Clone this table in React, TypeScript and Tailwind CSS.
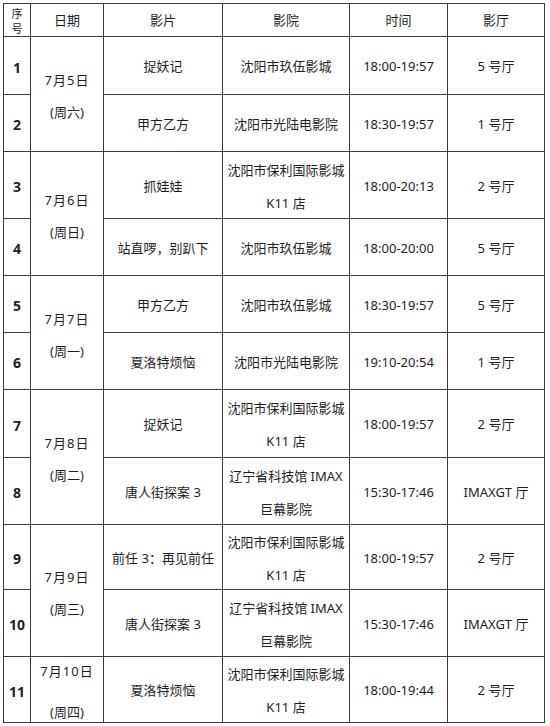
import React from "react";

type Row = {
  n: string;
  date?: { lines: string[]; span: number; leading?: string };
  film: string;
  cinema: string[];
  time: string;
  hall: string;
};

const rows: Row[] = [
  { n: "1", date: { lines: ["7月5日", "(周六)"], span: 2 }, film: "捉妖记", cinema: ["沈阳市玖伍影城"], time: "18:00-19:57", hall: "5 号厅" },
  { n: "2", film: "甲方乙方", cinema: ["沈阳市光陆电影院"], time: "18:30-19:57", hall: "1 号厅" },
  { n: "3", date: { lines: ["7月6日", "(周日)"], span: 2 }, film: "抓娃娃", cinema: ["沈阳市保利国际影城", "K11 店"], time: "18:00-20:13", hall: "2 号厅" },
  { n: "4", film: "站直啰，别趴下", cinema: ["沈阳市玖伍影城"], time: "18:00-20:00", hall: "5 号厅" },
  { n: "5", date: { lines: ["7月7日", "(周一)"], span: 2 }, film: "甲方乙方", cinema: ["沈阳市玖伍影城"], time: "18:30-19:57", hall: "5 号厅" },
  { n: "6", film: "夏洛特烦恼", cinema: ["沈阳市光陆电影院"], time: "19:10-20:54", hall: "1 号厅" },
  { n: "7", date: { lines: ["7月8日", "(周二)"], span: 2 }, film: "捉妖记", cinema: ["沈阳市保利国际影城", "K11 店"], time: "18:00-19:57", hall: "2 号厅" },
  { n: "8", film: "唐人街探案 3", cinema: ["辽宁省科技馆 IMAX", "巨幕影院"], time: "15:30-17:46", hall: "IMAXGT 厅" },
  { n: "9", date: { lines: ["7月9日", "(周三)"], span: 2 }, film: "前任 3：再见前任", cinema: ["沈阳市保利国际影城", "K11 店"], time: "18:00-19:57", hall: "2 号厅" },
  { n: "10", film: "唐人街探案 3", cinema: ["辽宁省科技馆 IMAX", "巨幕影院"], time: "15:30-17:46", hall: "IMAXGT 厅" },
  { n: "11", date: { lines: ["7月10日", "(周四)"], span: 1, leading: "leading-[41px]" }, film: "夏洛特烦恼", cinema: ["沈阳市保利国际影城", "K11 店"], time: "18:00-19:44", hall: "2 号厅" },
];

const cell = "bg-white flex flex-col items-center justify-center text-center";

export default function App() {
  return (
    <div
      className="bg-white w-[550px] h-[726px] pt-[3px] pl-[3px] text-[13px] text-[#1e1e1e]"
      style={{ fontFamily: '"Noto Sans", "Noto Sans CJK SC", sans-serif' }}
    >
      <div className="grid w-fit bg-[#3c3c3c] p-px gap-px grid-cols-[26px_72px_118px_126px_97px_96px] grid-rows-[32px_57px_56px_66px_56px_56px_56px_67px_66px_64px_66px_65px]">
        <div className={`${cell} text-[11px] leading-[15px] pt-px`}>
          <span>序</span>
          <span>号</span>
        </div>
        <div className={`${cell} pt-[2px]`}>日期</div>
        <div className={`${cell} pt-[2px]`}>影片</div>
        <div className={`${cell} pt-[2px]`}>影院</div>
        <div className={`${cell} pt-[2px]`}>时间</div>
        <div className={`${cell} pt-[2px]`}>影厅</div>
        {rows.map((r) => (
          <React.Fragment key={r.n}>
            <div className={`${cell} font-bold text-[14px] pt-[3px]`}>{r.n}</div>
            {r.date && (
              <div
                className={`${cell} pt-[4px] ${r.date.leading ?? "leading-[32px]"} ${
                  r.date.span === 2 ? "row-span-2" : ""
                }`}
              >
                <span className="tracking-[1px]">{r.date.lines[0]}</span>
                <span>{r.date.lines[1]}</span>
              </div>
            )}
            <div className={`${cell} pt-[3px]`}>{r.film}</div>
            <div className={`${cell} pt-[3px] leading-[33px]`}>
              {r.cinema.map((l) => (
                <span key={l} className={r.cinema.length > 1 ? "" : "leading-normal"}>
                  {l}
                </span>
              ))}
            </div>
            <div className={`${cell} pt-[3px]`}>{r.time}</div>
            <div className={`${cell} pt-[3px]`}>{r.hall}</div>
          </React.Fragment>
        ))}
      </div>
    </div>
  );
}
